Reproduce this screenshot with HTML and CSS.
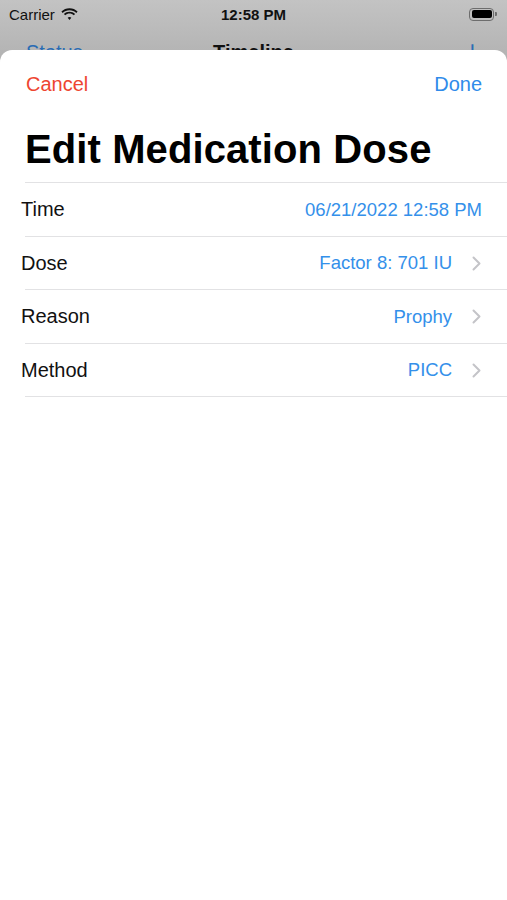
FILE: index.html
```html
<!DOCTYPE html>
<html lang="en">
<head>
    <meta charset="UTF-8">
    <meta name="viewport" content="width=device-width, initial-scale=1.0">
    <title>Edit Medication Dose</title>
    <link rel="stylesheet" href="styles.css">
</head>
<body>
    <div class="status-bar">
        <div class="carrier">
            Carrier
            <svg class="wifi" width="17" height="13" viewBox="0 0 17 13">
                <path d="M8.5 2.2c2.6 0 5 1 6.8 2.7l1.3-1.4C14.5 1.4 11.6.2 8.5.2S2.5 1.4.4 3.5l1.3 1.4C3.5 3.2 5.9 2.2 8.5 2.2z" fill="#111"/>
                <path d="M8.5 5.6c1.6 0 3.1.6 4.3 1.7l1.3-1.4c-1.5-1.4-3.5-2.2-5.6-2.2s-4.1.8-5.6 2.2l1.3 1.4C5.4 6.2 6.9 5.6 8.5 5.6z" fill="#111"/>
                <path d="M8.5 9c.7 0 1.3.2 1.8.7L8.5 12 6.7 9.7C7.2 9.2 7.8 9 8.5 9z" fill="#111"/>
            </svg>
        </div>
        <div class="clock">12:58 PM</div>
        <div class="battery">
            <span class="battery-body"><span class="battery-fill"></span></span>
            <span class="battery-cap"></span>
        </div>
    </div>

    <!-- screen behind the sheet -->
    <div class="back-nav">
        <span class="back-link">Status</span>
        <span class="back-title">Timeline</span>
        <span class="back-plus">+</span>
    </div>

    <div class="sheet">
        <div class="sheet-header">
            <button class="cancel">Cancel</button>
            <button class="done">Done</button>
        </div>
        <h1>Edit Medication Dose</h1>

        <ul class="form-list">
            <li class="row">
                <span class="label">Time</span>
                <span class="value">06/21/2022 12:58 PM</span>
            </li>
            <li class="row">
                <span class="label">Dose</span>
                <span class="value">Factor 8: 701 IU</span>
                <svg class="chevron" width="9" height="15" viewBox="0 0 9 15"><path d="M1.5 1.5l6 6-6 6" fill="none" stroke="#c4c4c8" stroke-width="2" stroke-linecap="round" stroke-linejoin="round"/></svg>
            </li>
            <li class="row">
                <span class="label">Reason</span>
                <span class="value">Prophy</span>
                <svg class="chevron" width="9" height="15" viewBox="0 0 9 15"><path d="M1.5 1.5l6 6-6 6" fill="none" stroke="#c4c4c8" stroke-width="2" stroke-linecap="round" stroke-linejoin="round"/></svg>
            </li>
            <li class="row">
                <span class="label">Method</span>
                <span class="value">PICC</span>
                <svg class="chevron" width="9" height="15" viewBox="0 0 9 15"><path d="M1.5 1.5l6 6-6 6" fill="none" stroke="#c4c4c8" stroke-width="2" stroke-linecap="round" stroke-linejoin="round"/></svg>
            </li>
        </ul>
    </div>
</body>
</html>
```

FILE: styles.css
```css
/* Reset and Basic Styles */
* {
    box-sizing: border-box;
    margin: 0;
    padding: 0;
}

body {
    font-family: 'Liberation Sans', Arial, sans-serif;
    background: linear-gradient(to bottom, #c3c3c3, #b2b2b2 60px);
    color: #000;
    width: 507px;
    height: 900px;
    overflow: hidden;
}

/* Status bar */
.status-bar {
    height: 28px;
    display: flex;
    align-items: center;
    justify-content: space-between;
    padding: 0 10px 0 9px;
    font-size: 15px;
    color: #111;
    position: relative;
}

.carrier {
    display: flex;
    align-items: center;
    gap: 6px;
}

.clock {
    position: absolute;
    left: 0;
    right: 0;
    text-align: center;
    font-weight: bold;
    pointer-events: none;
}

.battery {
    display: flex;
    align-items: center;
}

.battery-body {
    width: 25px;
    height: 13px;
    border: 1px solid #6d6d6d;
    border-radius: 4px;
    padding: 1.5px;
    display: flex;
}

.battery-fill {
    flex: 1;
    background-color: #000;
    border-radius: 2px;
}

.battery-cap {
    width: 2px;
    height: 4px;
    background-color: #6d6d6d;
    border-radius: 0 1px 1px 0;
    margin-left: 1px;
}

/* Screen behind the sheet */
.back-nav {
    height: 22px;
    overflow: hidden;
    display: flex;
    justify-content: space-between;
    align-items: flex-start;
    padding: 14px 27px 0 26px;
    font-size: 20px;
    line-height: 20px;
    position: relative;
}

.back-link {
    color: #2a6cb4;
}

.back-title {
    position: absolute;
    left: 0;
    right: 0;
    text-align: center;
    font-weight: bold;
    color: #111;
}

.back-plus {
    color: #2a6cb4;
    font-size: 26px;
    margin-top: -2px;
}

/* Sheet */
.sheet {
    background-color: #fff;
    border-radius: 12px 12px 0 0;
    height: 850px;
}

.sheet-header {
    display: flex;
    justify-content: space-between;
    align-items: center;
    height: 68px;
    padding: 0 25px 0 26px;
}

.sheet-header button {
    background: none;
    border: none;
    font-family: inherit;
    font-size: 20px;
    cursor: pointer;
}

.cancel {
    color: #ee4530;
}

.done {
    color: #2f8bea;
}

h1 {
    font-size: 40px;
    font-weight: bold;
    letter-spacing: 0.1px;
    padding: 9px 0 0 25px;
    height: 65px;
    line-height: 44px;
    color: #000;
    position: relative;
}

h1::after,
.row::after {
    content: '';
    position: absolute;
    left: 25px;
    right: 0;
    bottom: 0;
    height: 1px;
    background-color: #e2e2e4;
}

.form-list {
    list-style: none;
}

.row {
    display: flex;
    align-items: center;
    height: 53.5px;
    padding: 0 25px 0 21px;
    position: relative;
}

.label {
    font-size: 20px;
    color: #111;
    flex: 1;
}

.value {
    font-size: 18.5px;
    color: #3490ea;
}

.chevron {
    margin-left: 20px;
    margin-right: 1px;
}
```
